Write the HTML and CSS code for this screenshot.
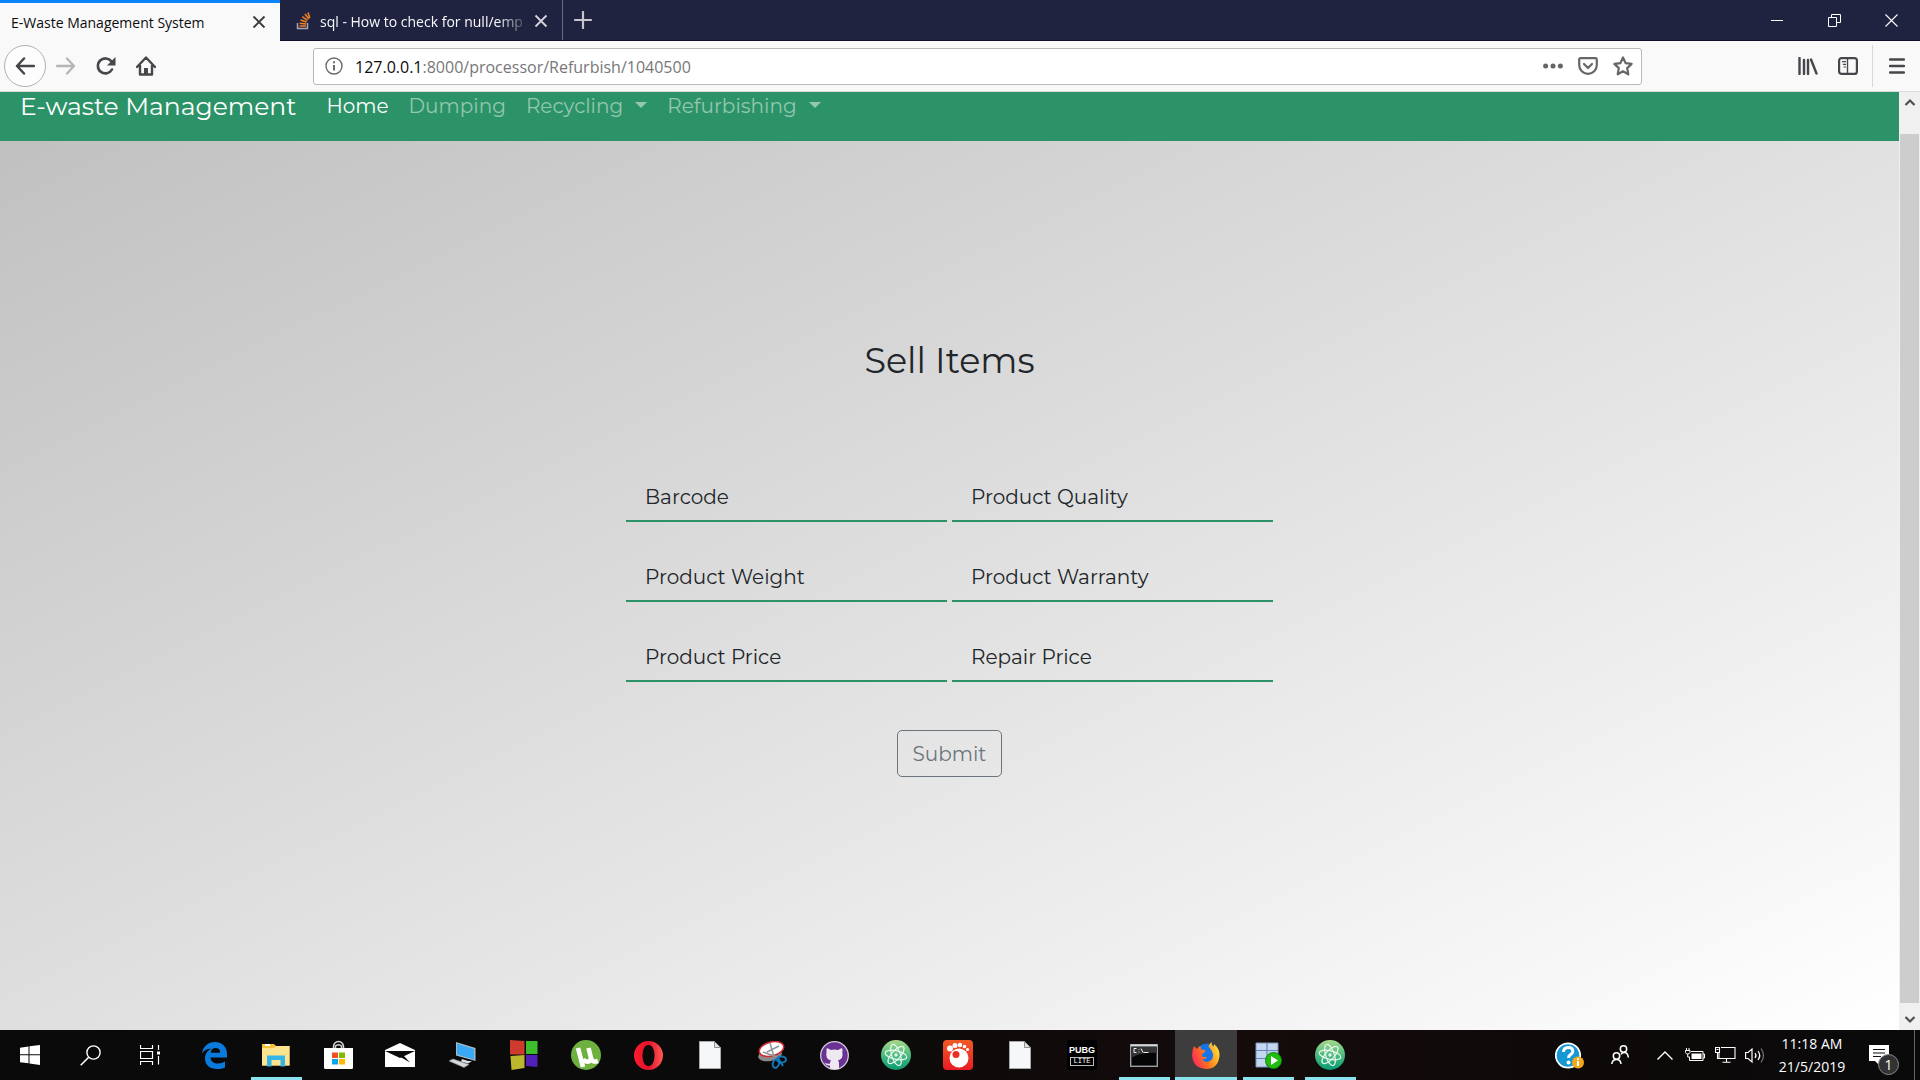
FILE: index.html
```html
<!DOCTYPE html>
<html lang="en">
<head>
<meta charset="utf-8">
<title>E-Waste Management System</title>
<link rel="stylesheet" href="styles.css">
</head>
<body>
<svg class="defs" aria-hidden="true">
  <defs>
    <linearGradient id="atomFill" x1="0" y1="0" x2="0" y2="1"><stop offset="0" stop-color="#a9d98a"/><stop offset=".5" stop-color="#4dbb80"/><stop offset="1" stop-color="#079a72"/></linearGradient>
    <linearGradient id="operaFill"><stop offset="0" stop-color="#ff1b2d"/><stop offset=".5" stop-color="#e3122a"/><stop offset="1" stop-color="#ff5a55"/></linearGradient>
    <linearGradient id="foxFill" x1="0" y1=".6" x2="1" y2=".2"><stop offset="0" stop-color="#ff2a5a"/><stop offset=".45" stop-color="#ff7a1a"/><stop offset="1" stop-color="#ffe53b"/></linearGradient>
    <linearGradient id="gomFill" x1="0" y1="0" x2="0" y2="1"><stop offset="0" stop-color="#f15a25"/><stop offset="1" stop-color="#e91c24"/></linearGradient>
    <symbol id="atom" viewBox="0 0 30 30">
      <circle cx="15" cy="15" r="15" fill="url(#atomFill)"/>
      <g fill="none" stroke="#e9f8ee" stroke-width="1.2"><ellipse cx="15" cy="15" rx="11" ry="4.3" transform="rotate(12 15 15)"/><ellipse cx="15" cy="15" rx="11" ry="4.3" transform="rotate(72 15 15)"/><ellipse cx="15" cy="15" rx="11" ry="4.3" transform="rotate(132 15 15)"/></g>
      <circle cx="15" cy="15" r="1.7" fill="#e9f8ee"/>
    </symbol>
    <symbol id="file" viewBox="0 0 22 28">
      <path d="M.5.5h15l6 6v21H.5z" fill="#f5f7f8" stroke="#a9a9a9"/><path d="M15.500.5v6h6z" fill="#dfe2e4" stroke="#8f8f8f"/>
    </symbol>
  </defs>
</svg>

<header class="browser">
  <div class="tabstrip">
    <div class="tab tab-active">
      <span class="tab-title">E-Waste Management System</span>
      <button class="tab-close" aria-label="Close tab"><svg width="14" height="14" viewBox="0 0 14 14"><path d="M1.500 1.500l11 11m0-11l-11 11" stroke="#3a3a3e" stroke-width="1.800"/></svg></button>
    </div>
    <div class="tab tab-idle">
      <svg class="favicon" width="16" height="18" viewBox="0 0 16 18"><path d="M1.500 11v5.500h10V11" fill="none" stroke="#a9a9ad" stroke-width="1.500"/><path d="M3.500 14h6.500M3.700 11.200l6.400.8M4.500 8l6.100 2M6.300 4.600l5.200 3.700M9 2l3.900 5M12 .5l1.800 5.500" stroke="#f48024" stroke-width="1.600"/></svg>
      <span class="tab-title tab-fade">sql - How to check for null/emp</span>
      <button class="tab-close" aria-label="Close tab"><svg width="14" height="14" viewBox="0 0 14 14"><path d="M1.500 1.500l11 11m0-11l-11 11" stroke="#d4d4da" stroke-width="1.800"/></svg></button>
    </div>
    <button class="new-tab" aria-label="New tab"><svg width="18" height="18" viewBox="0 0 18 18"><path d="M9 1v16M1 9h16" stroke="#c5c5cd" stroke-width="2.200" stroke-linecap="round"/></svg></button>
    <div class="window-controls">
      <button aria-label="Minimize"><svg width="13" height="13" viewBox="0 0 13 13"><path d="M0 6.500h12" stroke="#fff"/></svg></button>
      <button aria-label="Restore"><svg width="13" height="13" viewBox="0 0 13 13"><path d="M.5 3.500h8v9h-8zM3.500 3.500v-3h9v8h-4" fill="none" stroke="#fff"/></svg></button>
      <button aria-label="Close"><svg width="13" height="13" viewBox="0 0 13 13"><path d="M.5.5l12 12m0-12l-12 12" stroke="#fff" stroke-width="1.100"/></svg></button>
    </div>
  </div>

  <div class="toolbar">
    <div class="nav-buttons">
      <button class="back" aria-label="Back"><svg width="20" height="18" viewBox="0 0 20 18"><path d="M9 1.500L2 9l7 7.500M2 9h17" fill="none" stroke="#47474b" stroke-width="2.500" stroke-linecap="round" stroke-linejoin="round"/></svg></button>
      <button class="tool" aria-label="Forward"><svg width="20" height="18" viewBox="0 0 20 18"><path d="M11 1.500L18 9l-7 7.500M18 9H1" fill="none" stroke="#b5b5b7" stroke-width="2.300" stroke-linecap="round" stroke-linejoin="round"/></svg></button>
      <button class="tool" aria-label="Reload"><svg width="20" height="20" viewBox="0 0 20 20"><path d="M16 13.500A7.500 7.500 0 1 1 15.500 5.500" fill="none" stroke="#47474b" stroke-width="2.600" stroke-linecap="round"/><path d="M19.500 1v8.500H11z" fill="#47474b"/></svg></button>
      <button class="tool" aria-label="Home"><svg width="20" height="20" viewBox="0 0 20 20"><path d="M1 11l9-9.500L19 11M4 9.500V18.500h12V9.500" fill="none" stroke="#47474b" stroke-width="2.400" stroke-linecap="round" stroke-linejoin="round"/><path d="M8 18v-6h4v6z" fill="#47474b"/></svg></button>
    </div>
    <div class="urlbar">
      <svg width="18" height="18" viewBox="0 0 18 18"><circle cx="9" cy="9" r="8" fill="none" stroke="#6b6b6f" stroke-width="1.400"/><path d="M9 8v5.500M9 4.300v2" stroke="#6b6b6f" stroke-width="2"/></svg>
      <span class="url"><b>127.0.0.1</b>:8000/processor/Refurbish/1040500</span>
      <div class="url-actions">
        <button aria-label="Page actions"><svg width="20" height="6" viewBox="0 0 20 6"><g fill="#666669"><circle cx="2.600" cy="3" r="2.500"/><circle cx="10" cy="3" r="2.500"/><circle cx="17.400" cy="3" r="2.500"/></g></svg></button>
        <button aria-label="Save to Pocket"><svg width="20" height="18" viewBox="0 0 20 18"><path d="M2.500 1.200h15q1.300 0 1.300 1.300v5.500a8.800 8.800 0 0 1-17.600 0V2.500q0-1.300 1.300-1.300z" fill="none" stroke="#666669" stroke-width="2.200"/><path d="M6 7l4 4 4-4" fill="none" stroke="#666669" stroke-width="2.200" stroke-linecap="round" stroke-linejoin="round"/></svg></button>
        <button aria-label="Bookmark"><svg width="20" height="20" viewBox="0 0 20 20"><path d="M10 1.500l2.600 5.600 6 .8-4.400 4.200 1.100 6.200L10 15.300l-5.300 3 1.100-6.200L1.400 7.900l6-.8z" fill="none" stroke="#666669" stroke-width="2.200" stroke-linejoin="round"/></svg></button>
      </div>
    </div>
    <div class="tool-right">
      <button class="tool" aria-label="Library"><svg width="20" height="18" viewBox="0 0 20 18"><path d="M1.500 1v16M6 3v14M10 3v14M13 2.500l5.500 14" stroke="#47474b" stroke-width="2.400" stroke-linecap="round"/></svg></button>
      <button class="tool" aria-label="Sidebars"><svg width="20" height="18" viewBox="0 0 20 18"><rect x="1.100" y="1.100" width="17.800" height="15.800" rx="2.500" fill="none" stroke="#47474b" stroke-width="2.200"/><path d="M9.500 2v14" stroke="#47474b" stroke-width="1.400"/><path d="M4 4.700h4M4.800 7.400H8M5.500 10H8" stroke="#47474b" stroke-width="1.200"/></svg></button>
      <button class="menu" aria-label="Menu"><svg width="16" height="16" viewBox="0 0 16 16"><path d="M1 1.500h14M1 8h14M1 14.500h14" stroke="#47474b" stroke-width="2.300" stroke-linecap="round"/></svg></button>
    </div>
  </div>
</header>

<div class="viewport">
  <div class="page">
    <nav class="site-nav">
      <a class="brand" href="#">E-waste Management</a>
      <a class="link current" href="#">Home</a>
      <a class="link" href="#">Dumping</a>
      <a class="link drop" href="#">Recycling</a>
      <a class="link drop" href="#">Refurbishing</a>
    </nav>
    <main class="content">
      <h1>Sell Items</h1>
      <form class="sell-form">
        <div class="fields">
          <input type="text" placeholder="Barcode" aria-label="Barcode">
          <input type="text" placeholder="Product Quality" aria-label="Product Quality">
          <input type="text" placeholder="Product Weight" aria-label="Product Weight">
          <input type="text" placeholder="Product Warranty" aria-label="Product Warranty">
          <input type="text" placeholder="Product Price" aria-label="Product Price">
          <input type="text" placeholder="Repair Price" aria-label="Repair Price">
        </div>
        <button class="submit" type="button">Submit</button>
      </form>
    </main>
  </div>
  <div class="scrollbar">
    <svg width="19" height="42" viewBox="0 0 19 42"><path d="M5.500 13l4.500-4.500 4.500 4.500" fill="none" stroke="#505050" stroke-width="2.200"/></svg>
    <div class="thumb"></div>
    <svg width="19" height="27" viewBox="0 0 19 27"><path d="M5.500 14l4.500 4.500 4.500-4.500" fill="none" stroke="#505050" stroke-width="2.200"/></svg>
  </div>
</div>

<footer class="taskbar">
  <div class="system">
    <button aria-label="Start"><svg width="20" height="20" viewBox="0 0 20 20"><path d="M0 2.800L8.500 1.500v7.800H0zM9.500 1.300L20 0v9.300H9.500zM0 10.300h8.500v8L0 17.200zM9.500 10.300H20V20L9.500 18.500z" fill="#fff"/></svg></button>
    <button aria-label="Search"><svg width="21" height="21" viewBox="0 0 21 21"><circle cx="13.500" cy="7.500" r="6.600" fill="none" stroke="#fff" stroke-width="1.400"/><path d="M8.700 12.300L.7 20.300" stroke="#fff" stroke-width="1.600"/></svg></button>
    <button aria-label="Task View"><svg width="21" height="20" viewBox="0 0 21 20"><path d="M.5 0v3.500h12V0M.5 20v-3.500h12V20M.5 6.500h12v7H.5zM18.500 0v5M18.500 11v8.500" fill="none" stroke="#fff" stroke-width="1.200"/><path d="M17 6.500h3v3h-3z" fill="#fff"/></svg></button>
  </div>
  <div class="apps">
    <button aria-label="Edge"><svg width="25" height="27" viewBox="0 0 25 27"><path d="M0 11.500C1 4.500 6 0 13 0c7.500 0 12 5 12 12v3.500H8.500c.2 4 3.500 6 7.500 6 3 0 5-.8 7-2v6c-2.500 1.200-5 1.500-8 1.500C8 27 3 23 3 16.500 3 12 5.500 8.500 9.500 6.800 5.500 6.500 2 8.500 0 11.500zM8.700 10.800h9.500c0-3-1.500-4.800-4.500-4.800s-4.700 2-5 4.800z" fill="#0a7bdd"/></svg></button>
    <button class="open" aria-label="File Explorer"><svg width="28" height="24" viewBox="0 0 28 24"><path d="M0 1h12l2 2h13.500v19.500H0z" fill="#f4c23d"/><path d="M0 5h12l2-2h13.500v19.500H0z" fill="#ffe48f"/><path d="M3 2h5" stroke="#fff" stroke-width="2"/><path d="M5 12.500h18V23.500h-4.500V17h-9v6.500H5z" fill="#35b5e8"/></svg></button>
    <button aria-label="Store"><svg width="29" height="30" viewBox="0 0 29 30"><path d="M9.500 8V6.500a5 5 0 0 1 10 0V8M11.500 8V6a4 4 0 0 1 6 0v2" fill="none" stroke="#d5d5d5" stroke-width="1.500"/><path d="M0 8h29v19.500q0 1.500-1.500 1.500h-26Q0 29 0 27.500z" fill="#fff"/><path d="M8 12.500h6v5.500H8z" fill="#f25022"/><path d="M15 12.500h6v5.500h-6z" fill="#7fba00"/><path d="M8 19h6v5.500H8z" fill="#00a4ef"/><path d="M15 19h6v5.500h-6z" fill="#ffb900"/></svg></button>
    <button aria-label="Mail"><svg width="30" height="24" viewBox="0 0 30 24"><path d="M0 7L15 0l15 7v17H0z" fill="#fff"/><path d="M0 8h30l-15 7z" fill="#0b0b0b"/><path d="M12 12l6 0 7 7.500z" fill="#0b0b0b"/></svg></button>
    <button aria-label="Remote PC"><svg width="28" height="26" viewBox="0 0 28 26"><path d="M8 0l19.500 6v13L8 13.500z" fill="#a9b9c5"/><path d="M9 1.500l17 5.500v10.500L9 12.500z" fill="#39a8f5"/><path d="M14 17l6 2 4 0-4 2.500-7-2z" fill="#dce1e4"/><path d="M1 19l4-2 16 5.500-5 3z" fill="#d5d9dc" stroke="#8f9498" stroke-width=".6"/></svg></button>
    <button aria-label="Windows Tools"><svg width="28" height="30" viewBox="0 0 28 30"><path d="M0 0l14.500 1v13.500H0z" fill="#cf3a2f"/><path d="M16 1h11.500v13H16z" fill="#3ebd2c"/><path d="M.5 16l14-1v13l-13 2z" fill="#bdb62f"/><path d="M16 15h11.500v12L16 26z" fill="#5320b8"/></svg></button>
    <button aria-label="uTorrent"><svg width="30" height="30" viewBox="0 0 30 30"><circle cx="15" cy="15" r="15" fill="#6fb13f"/><path d="M7 8l5 19M12 20q7 4 8-2L17.500 8M20 18q1 5 7 3" fill="none" stroke="#fff" stroke-width="4.600"/></svg></button>
    <button aria-label="Opera"><svg width="29" height="29" viewBox="0 0 29 29"><path fill-rule="evenodd" d="M14.500 0a14.500 14.500 0 1 1 0 29 14.500 14.500 0 0 1 0-29zM14.500 4c-4 0-6 4.800-6 10.500S10.500 25 14.500 25s6-4.800 6-10.500S18.500 4 14.500 4z" fill="url(#operaFill)"/></svg></button>
    <button aria-label="Document"><svg width="22" height="28"><use href="#file"/></svg></button>
    <button aria-label="Snipping Tool"><svg width="29" height="28" viewBox="0 0 29 28"><ellipse cx="12" cy="14" rx="12" ry="6" fill="#8a8a8c" transform="rotate(-10 12 14)"/><ellipse cx="13.500" cy="8" rx="12.500" ry="7" fill="#fff" stroke="#cf2a32" stroke-width="1.500" transform="rotate(-15 13.500 8)"/><path d="M12 2l4 14M5 11l14 5M9 11L21 5" stroke="#909498" stroke-width="1.500"/><g fill="none" stroke="#1377b8" stroke-width="2"><ellipse cx="23.500" cy="18.500" rx="4.500" ry="3"/><ellipse cx="18" cy="22.500" rx="3" ry="4.500" transform="rotate(20 18 22.500)"/><path d="M20 17l5 8"/></g></svg></button>
    <button aria-label="GitHub"><svg width="29" height="29" viewBox="0 0 29 29"><circle cx="14.500" cy="14.500" r="13.800" fill="#6a3294" stroke="#d5cadb" stroke-width="1.300"/><path d="M7 7l4 2q3.500-.8 7 0l4-2q1 2 .3 4.500 1.500 6-4.300 8 1 1 1 3v5q-4 1.200-9 0v-3q-4 .5-5.500-3 3 2 5.500 1 0-2 1-3-6-1.500-4.500-8Q6 9 7 7z" fill="#eee9f1"/></svg></button>
    <button aria-label="Atom"><svg width="30" height="30"><use href="#atom"/></svg></button>
    <button aria-label="GOM Player"><svg width="30" height="30" viewBox="0 0 30 30"><rect width="30" height="30" rx="4" fill="url(#gomFill)"/><g fill="#fff"><circle cx="16" cy="18" r="9.500"/><circle cx="7" cy="8.500" r="3"/><circle cx="12" cy="5.500" r="2.500"/><circle cx="17" cy="5" r="2.200"/><circle cx="21.500" cy="6.500" r="1.800"/><circle cx="24.500" cy="9.500" r="1.600"/></g><circle cx="13" cy="14.500" r="3.500" fill="#ea3024"/></svg></button>
    <button aria-label="Document"><svg width="22" height="28"><use href="#file"/></svg></button>
    <button aria-label="PUBG Lite"><span class="pubg"><b>PUBG</b><i>LITE</i></span></button>
    <button class="open" aria-label="Command Prompt"><svg width="28" height="23" viewBox="0 0 28 23"><rect x=".7" y=".7" width="26.600" height="21.600" fill="#050505" stroke="#9c9fa3" stroke-width="1.400"/><path d="M1 1.500h26" stroke="#d6dade" stroke-width="2"/><path d="M1 14q10-6 26-5V3H1z" fill="#343434"/><path d="M6.500 4.500H4v4h2.500M9 5v.8M9 7.500v.8M11 4.500l2 4M13.500 8.500h5" fill="none" stroke="#eee" stroke-width="1"/></svg></button>
    <button class="open active" aria-label="Firefox"><svg width="28" height="28" viewBox="0 0 28 28"><circle cx="15" cy="13" r="10.500" fill="#1475e8"/><path d="M2 5l3 3q2-3 3.500-3 0 2 1 3.500l4 .8q0 2-3.500 3.700 0 2 1 3h4q-2 3-5 2.500 3 3.500 7 2 4.500-2 4-7.500-1-4-4.500-7.500 1-3 3-4.500 0 3 2 5l.5-3Q28 8 27.500 15 26 28 14 28 1 27 0 14.500 0 9 2 5z" fill="url(#foxFill)"/></svg></button>
    <button class="open" aria-label="Server Manager"><svg width="27" height="28" viewBox="0 0 27 28"><path d="M1 2h22v24H1z" fill="#c5d6ef" stroke="#7894be"/><path d="M1 9.500h22M1 17.500h22M12 2v24" stroke="#6689bd" stroke-width="1.200"/><circle cx="18.500" cy="19.500" r="8" fill="#20bd10" stroke="#0b8805"/><path d="M16 15l7 4.500-7 4.500z" fill="#fff"/></svg></button>
    <button class="open" aria-label="Atom"><svg width="30" height="30"><use href="#atom"/></svg></button>
  </div>
  <div class="tray">
    <button class="help" aria-label="Get Help"><svg width="29" height="27" viewBox="0 0 29 27"><circle cx="13" cy="13.500" r="12.200" fill="#1598d4" stroke="#fff" stroke-width="1.800"/><path d="M8.500 10q0-4.500 4.800-4.500 4.500 0 4.500 3.800 0 2-2.300 3.300-2 1.200-2 3.400" fill="none" stroke="#fff" stroke-width="3"/><circle cx="13.500" cy="20.500" r="2" fill="#fff"/><circle cx="23" cy="20.500" r="6" fill="#f6a81c"/><path d="M23 19v5M23 16.300v1.700" stroke="#fff" stroke-width="2"/></svg></button>
    <button class="people" aria-label="People"><svg width="18" height="20" viewBox="0 0 18 20"><g fill="none" stroke="#fff" stroke-width="1.500"><circle cx="12.500" cy="4" r="3.200"/><circle cx="5.500" cy="11" r="3.200"/><path d="M.8 19q.5-4.500 4.700-4.500T10 19M10 9.500q1-2 3-2 4 0 4.300 5"/></g></svg></button>
    <button aria-label="Show hidden icons"><svg width="16" height="9" viewBox="0 0 16 9"><path d="M.5 8.500L8 1l7.500 7.500" fill="none" stroke="#fff" stroke-width="1.400"/></svg></button>
    <button aria-label="Battery"><svg width="20" height="14" viewBox="0 0 20 14"><path d="M6 3.500h12v9H4.500V9M18 6h1.500v4H18" fill="none" stroke="#fff"/><path d="M6.500 5.500h10V11h-10z" fill="#fff"/><path d="M1.500 0v2M4 0v2M.5 2.500h4.500v2Q4.500 6 2.700 6 1 6 .5 4.500zM2.700 6v3h2" fill="none" stroke="#fff"/></svg></button>
    <button aria-label="Network"><svg width="21" height="16" viewBox="0 0 21 16"><path d="M6 .5h14v11H4V6M11.500 12v3M7.500 15.300h8M.5.500h4v5h-4zM2.500 5.500v6H4M1.500 2.500h2" fill="none" stroke="#fff" stroke-width="1.100"/></svg></button>
    <button aria-label="Volume"><svg width="20" height="17" viewBox="0 0 20 17"><path d="M.6 5.500h2.500L7 2v13l-3.900-3.500H.6z" fill="none" stroke="#fff" stroke-width="1.200"/><path d="M10 6q2 2.500 0 5M13 4q3.500 4.500 0 9" fill="none" stroke="#fff" stroke-width="1.200"/><path d="M16 1.500q5 7 0 14" fill="none" stroke="#777" stroke-width="1.200"/></svg></button>
    <div class="clock"><time>11:18 AM</time><time>21/5/2019</time></div>
    <button class="notes" aria-label="Notifications"><svg width="20" height="20" viewBox="0 0 20 20"><path d="M0 0h20v16H10v4l-4-4H0z" fill="#fff"/><path d="M4 4.500h12M4 8h12M4 11.500h8" stroke="#111" stroke-width="1.200"/></svg><span class="badge">1</span></button>
    <div class="show-desktop"></div>
  </div>
</footer>
</body>
</html>
```
FILE: styles.css
```css
* { box-sizing: border-box; }

body {
  margin: 0;
  min-height: 100vh;
  display: flex;
  flex-direction: column;
  font-family: "Segoe UI", "Open Sans", sans-serif;
}

button {
  display: flex;
  align-items: center;
  justify-content: center;
  margin: 0;
  padding: 0;
  border: 0;
  background: none;
  font: inherit;
}

svg { flex: none; }
.defs { position: absolute; width: 0; height: 0; }

/* Tab strip */
.tabstrip {
  display: flex;
  height: 41px;
  background: #202340;
  border-bottom: 1px solid #0d0f26;
}
.tab {
  display: flex;
  align-items: center;
  font-size: 14px;
  padding-right: 10px;
}
.tab-active {
  width: 280px;
  height: 41px;
  background: #f9f9fa;
  border-top: 3px solid #0a84ff;
  padding-left: 11px;
  color: #0c0c0d;
}
.tab-idle {
  width: 283px;
  padding-left: 16px;
  padding-top: 2px;
  border-right: 1px solid #6b6d80;
  color: #f9f9fa;
}
.favicon { margin-right: 8px; }
.tab-title {
  flex: 1;
  min-width: 0;
  overflow: hidden;
  white-space: nowrap;
}
.tab-fade { mask-image: linear-gradient(to left, transparent, #000 32px); }
.tab-close { width: 22px; height: 22px; }
.new-tab { width: 40px; }
.window-controls { display: flex; margin-left: auto; }
.window-controls button { width: 57px; }

/* Address toolbar */
.toolbar {
  display: flex;
  align-items: center;
  height: 51px;
  background: #f9f9fa;
  border-bottom: 1px solid #dcdcdd;
}
.nav-buttons {
  display: flex;
  align-items: center;
  width: 313px;
  padding-left: 4px;
}
.tool { width: 40px; height: 40px; }
.back {
  width: 42px;
  height: 42px;
  border: 1px solid #b1b1b3;
  border-radius: 50%;
  background: #fdfdfe;
}
.urlbar {
  flex: 1;
  display: flex;
  align-items: center;
  height: 37px;
  padding: 0 8px 0 11px;
  gap: 12px;
  border: 1px solid #b9b9bb;
  border-radius: 3px;
  background: #fff;
}
.url { flex: 1; padding-top: 2px; font-size: 16px; color: #77777a; }
.url b { font-weight: 400; color: #0c0c0d; }
.url-actions { display: flex; gap: 15px; }
.tool-right {
  display: flex;
  align-items: center;
  justify-content: flex-end;
  width: 278px;
}
.menu {
  width: 48px;
  height: 42px;
  margin-left: 4px;
  border-left: 1px solid #d7d7db;
}

/* Visible part of the web page */
.viewport { flex: 1; display: flex; }
.page {
  flex: 1;
  display: flex;
  flex-direction: column;
  background: linear-gradient(to bottom right, #bfbfbf, #fff);
  font-family: Montserrat, Inter, sans-serif;
  color: #212529;
}
.site-nav {
  display: flex;
  align-items: center;
  gap: 20px;
  height: 49px;
  padding: 0 20px 21px;
  background: #2c9368;
  line-height: 28px;
}
.site-nav a { color: #93c7b0; text-decoration: none; font-size: 20px; }
.site-nav .brand { color: #fff; font-size: 25px; margin-right: 10px; }
.site-nav .current { color: #fff; }
.drop::after {
  content: "";
  display: inline-block;
  margin-left: 12px;
  vertical-align: 5px;
  border: 6px solid transparent;
  border-top-color: currentColor;
  border-bottom: 0;
}
.content {
  flex: 1;
  display: flex;
  flex-direction: column;
  align-items: center;
  padding: 198px 20px 40px;
}
h1 { margin: 0 0 89px; font-size: 35px; line-height: 44px; font-weight: 400; }
.sell-form { display: flex; flex-direction: column; align-items: center; gap: 48px; }
.fields { display: grid; grid-template-columns: 321px 321px; gap: 30px 5px; }
.fields input {
  width: 100%;
  height: 50px;
  padding: 2px 19px 0;
  border: 0;
  border-bottom: 2px solid #2c9368;
  background: transparent;
  font: 20px Montserrat, Inter, sans-serif;
  color: #212529;
}
.fields input::placeholder { color: #212529; opacity: 1; }
.submit {
  height: 47px;
  padding: 0 15px;
  border: 1px solid #6c757d;
  border-radius: 5px;
  color: #6c757d;
  font-size: 20px;
}

.scrollbar {
  display: flex;
  flex-direction: column;
  width: 21px;
  padding: 0 1px;
  background: #f0f0f0;
}
.thumb { flex: 1; background: #cdcdcd; }

/* Taskbar */
.taskbar {
  display: flex;
  height: 50px;
  background: linear-gradient(90deg, #0a0a0a 40%, #150b0b 65%, #0d0909 85%, #0a0a0a);
  color: #fff;
}
.system { display: flex; margin-right: 3px; }
.system button { width: 60px; }
.apps { display: flex; }
.apps button { width: 62px; }
.apps .open {
  background: linear-gradient(#8ae3ee, #8ae3ee) center bottom / 51px 3px no-repeat;
}
.apps .active {
  background: linear-gradient(#8ae3ee, #8ae3ee) center bottom / 100% 3px no-repeat #3e3d3d;
}
.pubg {
  display: flex;
  flex-direction: column;
  align-items: center;
  justify-content: center;
  width: 30px;
  height: 30px;
  border-radius: 3px;
  background: #000;
  color: #fff;
  font-family: "Liberation Sans Narrow", "Liberation Sans", sans-serif;
}
.pubg b { font-size: 9px; line-height: 13px; }
.pubg i {
  width: 24px;
  border: 1px solid #bbb;
  font: 7px/7px "Liberation Mono", monospace;
  text-align: center;
}
.tray { display: flex; margin-left: auto; }
.tray button { width: 30px; }
.tray .help { width: 42px; }
.tray .people { width: 60px; }
.clock {
  display: flex;
  flex-direction: column;
  align-items: center;
  width: 84px;
  padding-top: 2px;
  font-size: 14px;
  line-height: 23px;
}
.tray .notes { position: relative; width: 60px; padding-right: 10px; }
.badge {
  position: absolute;
  left: 24px;
  top: 24px;
  width: 21px;
  height: 21px;
  border: 1px solid #8a8a8a;
  border-radius: 50%;
  background: #333;
  color: #fff;
  font-size: 14px;
  line-height: 19px;
}
.show-desktop { width: 6px; border-left: 1px solid #666; }
```
